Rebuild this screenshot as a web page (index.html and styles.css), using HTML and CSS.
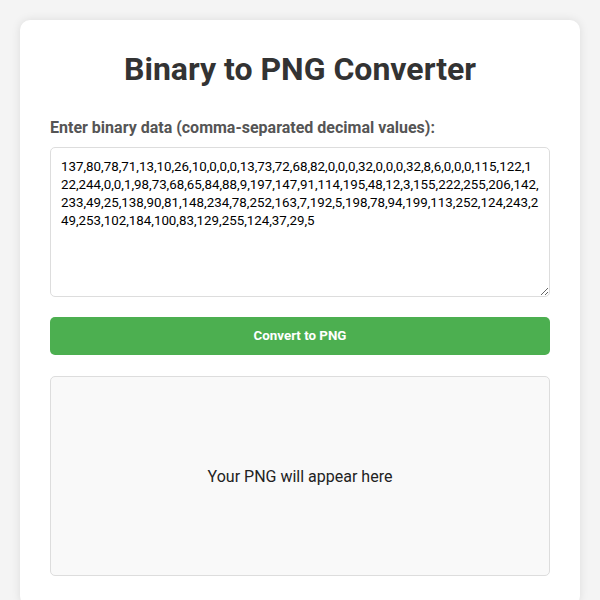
FILE: index.html
```html
<!DOCTYPE html>
<html lang="en">
<head>
    <meta charset="UTF-8">
    <meta name="viewport" content="width=device-width, initial-scale=1.0">
    <title>Binary to PNG Converter</title>
    <link rel="stylesheet" href="styles.css">
</head>
<body>
    <div class="container">
        <h1>Binary to PNG Converter</h1>
        <label for="binaryInput">Enter binary data (comma-separated decimal values):</label>
        <textarea id="binaryInput">137,80,78,71,13,10,26,10,0,0,0,13,73,72,68,82,0,0,0,32,0,0,0,32,8,6,0,0,0,115,122,122,244,0,0,1,98,73,68,65,84,88,9,197,147,91,114,195,48,12,3,155,222,255,206,142,233,49,25,138,90,81,148,234,78,252,163,7,192,5,198,78,94,199,113,252,124,243,249,253,102,184,100,83,129,255,124,37,29,5</textarea>
        <button class="convert">Convert to PNG</button>
        <div class="output">Your PNG will appear here</div>
    </div>
</body>
</html>
```

FILE: styles.css
```css
*{
    box-sizing: border-box;
}
body{
    margin: 0;
    padding: 20px;
    background-color: #f4f4f4;
    font-family: Roboto, "Liberation Sans", sans-serif;
}
.container{
    max-width: 560px;
    margin: 0 auto;
    background-color: #fff;
    padding: 30px;
    border-radius: 10px;
    box-shadow: 0 0 10px rgba(0, 0, 0, 0.1);
}
h1{
    margin: 0 0 30px;
    font-size: 32px;
    text-align: center;
    color: #333;
}
label{
    display: block;
    margin-bottom: 10px;
    font-weight: bold;
    font-size: 16px;
    color: #555;
}
textarea{
    display: block;
    width: 100%;
    height: 150px;
    padding: 10px;
    border: 1px solid #ddd;
    border-radius: 5px;
    font-family: inherit;
    font-size: 13.333px;
    line-height: 18px;
    color: #000;
    resize: vertical;
}
.convert{
    display: block;
    width: 100%;
    margin-top: 20px;
    padding: 11px 0;
    border: none;
    border-radius: 5px;
    background-color: #4caf50;
    color: #fff;
    font-family: inherit;
    font-size: 13.333px;
    line-height: 16px;
    font-weight: bold;
}
.output{
    margin-top: 21px;
    min-height: 200px;
    display: flex;
    justify-content: center;
    align-items: center;
    border: 1px solid #ddd;
    border-radius: 5px;
    background-color: #f9f9f9;
    font-size: 16px;
    color: #222;
}
```
